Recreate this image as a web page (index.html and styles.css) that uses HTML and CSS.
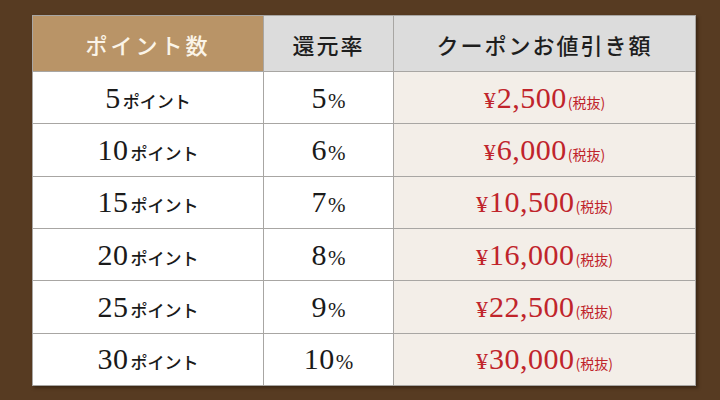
FILE: index.html
```html
<!DOCTYPE html>
<html lang="ja">
<head>
<meta charset="utf-8">
<link rel="stylesheet" href="styles.css">
</head>
<body>
<div class="frame">
<table class="rates">
  <colgroup><col class="c1"><col class="c2"><col class="c3"></colgroup>
  <thead>
    <tr>
      <th class="h-gold">ポイント数</th>
      <th class="h-gray">還元率</th>
      <th class="h-gray">クーポンお値引き額</th>
    </tr>
  </thead>
  <tbody>
    <tr><td><span class="num">5</span><span class="pt">ポイント</span></td><td><span class="num">5</span><span class="pc">%</span></td><td class="price"><span class="yen">¥</span><span class="num">2,500</span><span class="tax">(税抜)</span></td></tr>
    <tr><td><span class="num">10</span><span class="pt">ポイント</span></td><td><span class="num">6</span><span class="pc">%</span></td><td class="price"><span class="yen">¥</span><span class="num">6,000</span><span class="tax">(税抜)</span></td></tr>
    <tr><td><span class="num">15</span><span class="pt">ポイント</span></td><td><span class="num">7</span><span class="pc">%</span></td><td class="price"><span class="yen">¥</span><span class="num">10,500</span><span class="tax">(税抜)</span></td></tr>
    <tr><td><span class="num">20</span><span class="pt">ポイント</span></td><td><span class="num">8</span><span class="pc">%</span></td><td class="price"><span class="yen">¥</span><span class="num">16,000</span><span class="tax">(税抜)</span></td></tr>
    <tr><td><span class="num">25</span><span class="pt">ポイント</span></td><td><span class="num">9</span><span class="pc">%</span></td><td class="price"><span class="yen">¥</span><span class="num">22,500</span><span class="tax">(税抜)</span></td></tr>
    <tr><td><span class="num">30</span><span class="pt">ポイント</span></td><td><span class="num">10</span><span class="pc">%</span></td><td class="price"><span class="yen">¥</span><span class="num">30,000</span><span class="tax">(税抜)</span></td></tr>
  </tbody>
</table>
</div>
</body>
</html>
```
FILE: styles.css
```css
html, body {
  margin: 0;
  padding: 0;
}
body {
  width: 720px;
  height: 400px;
  background: #573b22;
  overflow: hidden;
}
.frame {
  padding: 15px 0 0 32px;
}
.rates {
  width: 663px;
  border-collapse: collapse;
  table-layout: fixed;
  border: 1px solid #8d8175;
  box-shadow: 2px 2px 3px rgba(40, 25, 10, 0.6);
}
.c1 { width: 231px; }
.c2 { width: 130px; }
.c3 { width: 302px; }
th, td {
  padding: 0;
  text-align: center;
  vertical-align: middle;
  border: 1px solid #a8a6a3;
  white-space: nowrap;
}
th {
  height: 55px;
  font-family: "Noto Sans CJK JP", sans-serif;
  font-weight: 500;
  font-size: 22px;
  letter-spacing: 2px;
}
.h-gold {
  background: #b99467;
  color: #fbf4e8;
  letter-spacing: 3px;
}
.h-gray {
  background: #dcdcdc;
  color: #1e1e1e;
}
td {
  height: 51.33px;
  background: #ffffff;
  color: #1a1a1a;
}
td.price {
  background: #f3eee8;
  color: #c0242b;
}
.num {
  font-family: "Liberation Serif", serif;
  font-size: 30px;
  letter-spacing: 0.5px;
}
.pt {
  font-family: "Noto Sans CJK JP", sans-serif;
  font-weight: 500;
  font-size: 17px;
  margin-left: 2px;
}
.pc {
  font-family: "Liberation Serif", serif;
  font-size: 21px;
  margin-left: 1px;
}
.yen {
  font-family: "Liberation Serif", serif;
  font-size: 24px;
  margin-right: 1px;
}
.tax {
  font-family: "Noto Sans CJK JP", sans-serif;
  font-size: 14px;
  margin-left: 1px;
}
```
